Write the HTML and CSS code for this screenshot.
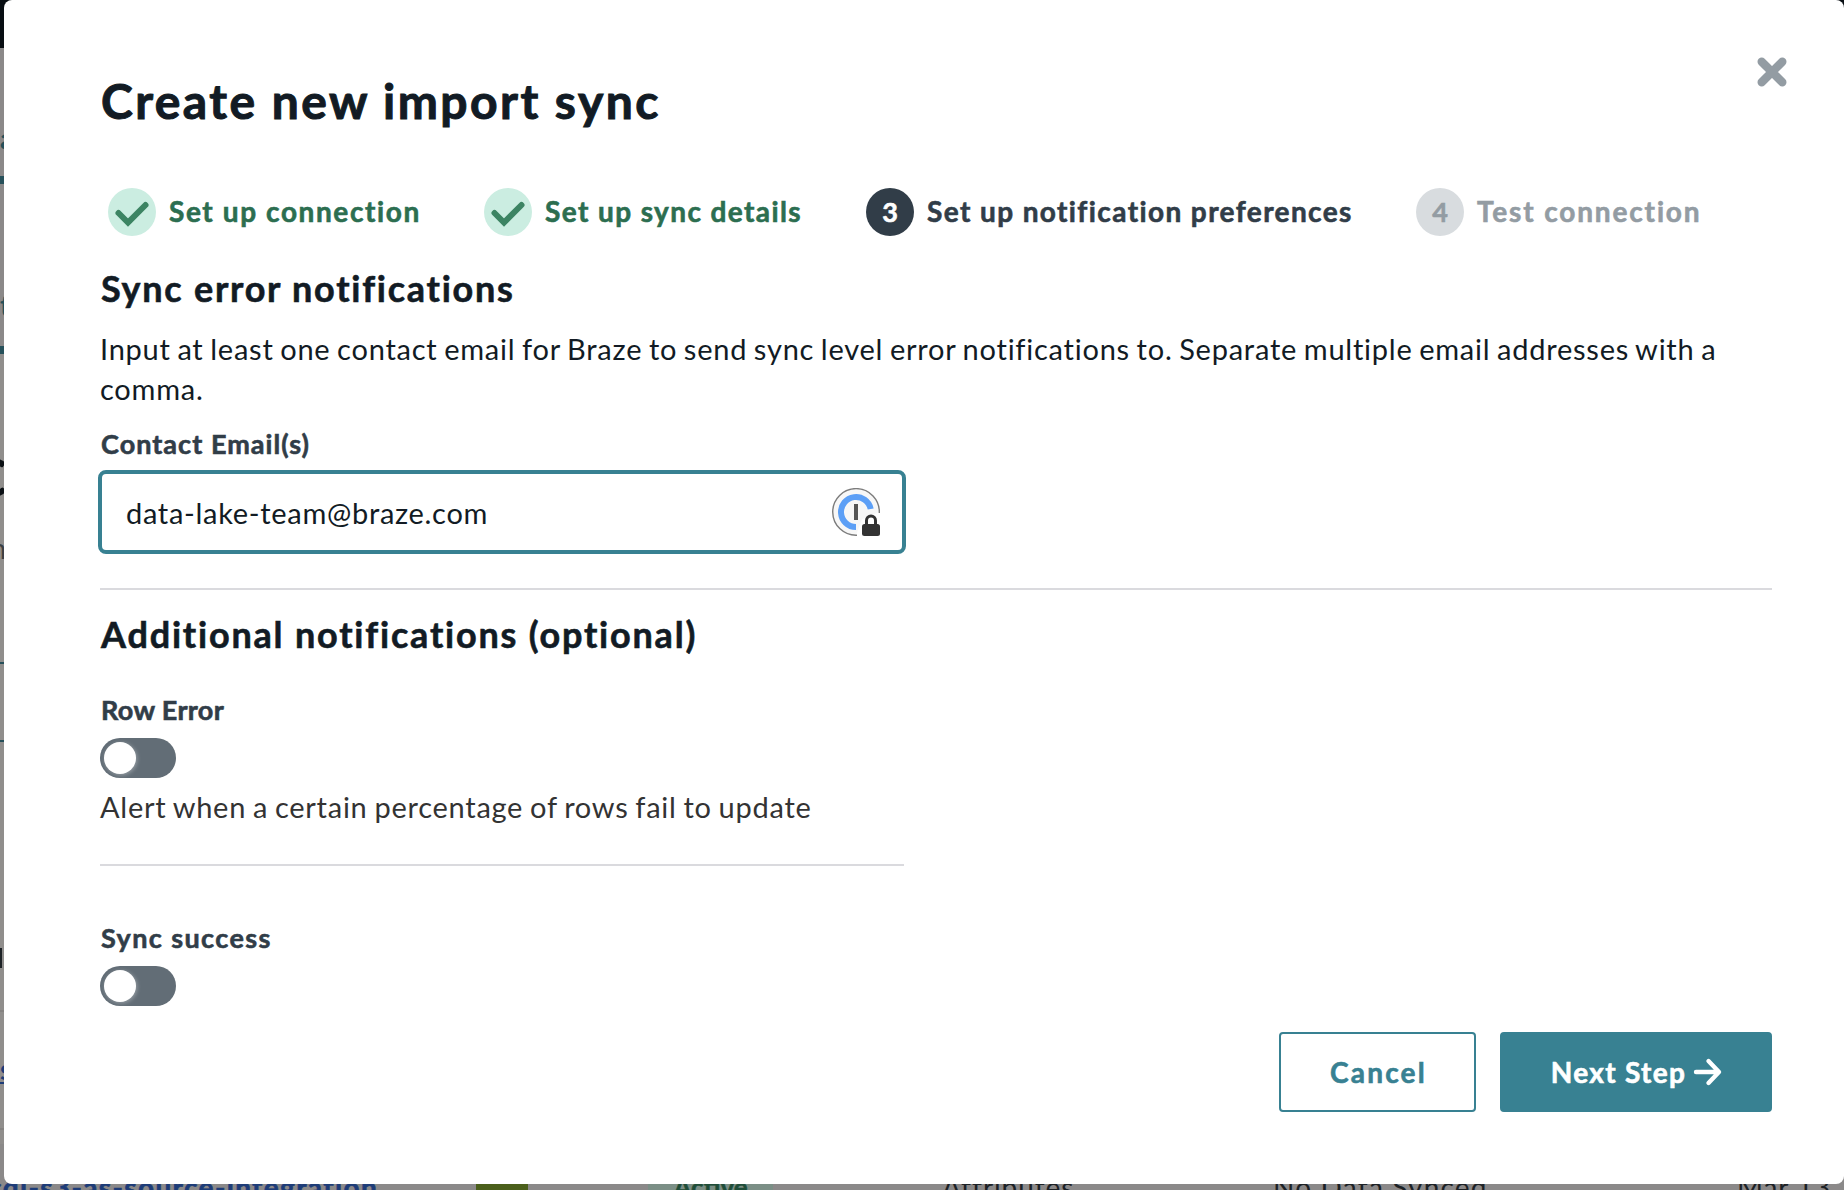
FILE: index.html
```html
<!DOCTYPE html>
<html lang="en">
<head>
<meta charset="utf-8">
<title>Create new import sync</title>
<link rel="stylesheet" href="styles.css">
</head>
<body>
<div class="page" aria-hidden="true">
  <div class="page-topbar"></div>
  <div class="page-tab page-tab-first">a</div>
  <div class="page-tab page-tab-second">t</div>
  <div class="page-body">
    <div class="page-title">C</div>
    <div class="page-note">n</div>
    <div class="page-field"></div>
    <div class="page-heading"></div>
    <div class="page-row"><span class="page-link">s</span></div>
  </div>
  <div class="table-row">
    <span class="cell-name">cdi-s3-as-source-integration</span>
    <span class="cell-icon"><svg viewBox="0 0 52 52" width="52" height="52"><path d="M10 21l2 18M24 23l18 10M38 22l6 14" fill="none" stroke="#a3ad85" stroke-width="2"/></svg></span>
    <span class="cell-badge">Active</span>
    <span class="cell-type">Attributes</span>
    <span class="cell-sync">No Data Synced</span>
    <span class="cell-date">Mar 13,</span>
  </div>
</div>

<main class="modal" role="dialog" aria-modal="true">
  <button class="close" aria-label="Close"><svg viewBox="0 0 30 30" width="30" height="30"><path d="M4.7 4.7l20.6 20.6M25.3 4.7L4.7 25.3" fill="none" stroke="#939ca3" stroke-width="8.4" stroke-linecap="round"/></svg></button>
  <h1 class="title">Create new import sync</h1>
  <ol class="steps">
    <li class="step step-done"><span class="bullet"><svg viewBox="0 0 48 48" width="48" height="48"><path d="M10.5 25l9.500 9.500L37.500 17" fill="none" stroke="#3c8463" stroke-width="6" stroke-linecap="round"/></svg></span><span>Set up connection</span></li>
    <li class="step step-done"><span class="bullet"><svg viewBox="0 0 48 48" width="48" height="48"><path d="M10.5 25l9.500 9.500L37.500 17" fill="none" stroke="#3c8463" stroke-width="6" stroke-linecap="round"/></svg></span><span>Set up sync details</span></li>
    <li class="step step-current"><span class="bullet">3</span><span>Set up notification preferences</span></li>
    <li class="step step-next"><span class="bullet">4</span><span>Test connection</span></li>
  </ol>

  <h2 class="heading">Sync error notifications</h2>
  <p class="intro">Input at least one contact email for Braze to send sync level error notifications to. Separate multiple email addresses with a<br>comma.</p>
  <div class="label label-email">Contact Email(s)</div>
  <div class="input">
    <span>data-lake-team@braze.com</span>
    <svg viewBox="0 0 48 48" width="48" height="48">
      <path d="M24 47.2A23.3 23.3 0 1 1 47.3 24L30 31z" fill="#f7f7f7"/>
      <path d="M25 47.2A23.3 23.3 0 1 1 47.3 25" fill="none" stroke="#7c7c7c" stroke-width="1.4"/>
      <path d="M24 39a15 15 0 1 1 14.7-18" fill="none" stroke="#5c9ff6" stroke-width="6"/>
      <path d="M22 16h4v16h-4z" fill="#555"/>
      <path d="M34.500 36v-3.500a4.500 4.500 0 0 1 9 0v3.500" fill="none" stroke="#333" stroke-width="3"/>
      <rect x="30" y="36" width="18" height="12" rx="2.500" fill="#333"/>
    </svg>
  </div>
  <hr class="rule rule-full">
  <h2 class="heading heading-more">Additional notifications (optional)</h2>
  <div class="label label-row">Row Error</div>
  <div class="toggle"><span class="knob"></span></div>
  <p class="hint">Alert when a certain percentage of rows fail to update</p>
  <hr class="rule rule-half">
  <div class="label label-success">Sync success</div>
  <div class="toggle"><span class="knob"></span></div>
  <footer class="actions">
    <button class="button cancel">Cancel</button>
    <button class="button next"><span>Next Step</span><svg viewBox="0 0 30 30" width="30" height="30"><path d="M3 15h22M15.500 4L26 15 15.500 26" fill="none" stroke="#fff" stroke-width="4.400" stroke-linecap="round" stroke-linejoin="round"/></svg></button>
  </footer>
</main>
</body>
</html>
```
FILE: styles.css
```css
* { box-sizing: border-box; }
body { margin: 0; width: 1844px; height: 1190px; overflow: hidden; font-family: Lato, "Open Sans", sans-serif; background: #8b8989; }
h1, h2, p, ol, hr { margin: 0; padding: 0; border: 0; }

.page { position: absolute; inset: 0; overflow: hidden; display: flex; flex-direction: column; background: #8b8989; white-space: nowrap; }
.page > * { flex: none; }
.page-topbar { height: 48px; background: #080e13; }
.page-tab { width: 14px; border-bottom: 8px solid #26505a; color: #26505a; font-weight: 700; font-size: 28px; line-height: 34px; }
.page-tab-first { height: 136px; padding-top: 73px; }
.page-tab-second { height: 170px; padding-top: 104px; }
.page-body { height: 790px; display: flex; flex-direction: column; align-items: flex-start; background: #908e8c; }
.page-body > * { flex: none; }
.page-title { display: flex; justify-content: flex-end; width: 7px; height: 166px; padding-top: 90px; font-size: 54px; line-height: 66px; font-weight: 700; color: #0b1014; }
.page-note { display: flex; justify-content: flex-end; height: 142px; padding-top: 11px; width: 6px; font-size: 28px; line-height: 34px; color: #3c4043; }
.page-field { width: 10px; height: 80px; border: solid #26505a; border-width: 2px 0; }
.page-heading { height: 20px; width: 2px; margin-top: 206px; background: #1d2226; }
.page-row { width: 10px; height: 120px; margin-top: 42px; padding-top: 40px; border: solid #858381; border-width: 2px 0; }
.page-link { color: #1d3c78; font-size: 28px; line-height: 34px; font-weight: 700; text-decoration: underline; }
.table-row { height: 80px; display: flex; align-items: flex-start; padding-top: 23px; font-size: 28px; line-height: 40px; letter-spacing: .9px; color: #1d2226; }
.table-row > * { flex: none; }
.cell-name { width: 488px; margin-left: -12px; color: #1d3c78; font-weight: 700; letter-spacing: 1.36px; -webkit-text-stroke: .6px currentColor; }
.cell-icon { width: 52px; height: 52px; margin-top: -1px; background: #4b5f1b; }
.cell-badge { width: 125px; margin-left: 120px; text-align: center; background: #7b8f86; color: #1f4d38; font-weight: 700; font-size: 26px; letter-spacing: 0; -webkit-text-stroke: .5px currentColor; }
.cell-type { width: 331px; margin-left: 169px; }
.cell-sync { width: 464px; letter-spacing: 1.2px; }
.cell-icon svg { display: block; margin-top: -14px; }
.cell-icon { overflow: hidden; margin-top: -10px; }

.modal { position: absolute; left: 4px; top: 0; width: 1840px; height: 1184px; padding: 71px 72px 0 96px; border-radius: 8px; background: #fff; color: #121b24; }
.close { position: absolute; left: 1753px; top: 57px; width: 30px; height: 30px; padding: 0; border: 0; background: none; }
.close svg, .bullet svg { display: block; }
.title, .heading, .steps, .label, .button { -webkit-text-stroke: .6px currentColor; }
.title, .heading, .label { padding-left: 1px; }
.title { font-size: 48px; line-height: 60px; font-weight: 700; letter-spacing: 2.45px; -webkit-text-stroke-width: 1px; }
.steps { display: flex; margin: 57px 0 0 8px; list-style: none; font-size: 28px; font-weight: 700; line-height: 47px; letter-spacing: 1.5px; white-space: nowrap; }
.step { display: flex; gap: 13px; height: 48px; }
.step:nth-child(1) { width: 376px; letter-spacing: 1.6px; }
.step:nth-child(2) { width: 382px; letter-spacing: 1.4px; }
.step:nth-child(3) { width: 550px; letter-spacing: 1.4px; }
.bullet { flex: none; width: 48px; height: 48px; border-radius: 50%; text-align: center; letter-spacing: 0; font-size: 27px; }
.step-done { color: #2c6e50; }
.step-done .bullet { background: #cbede1; }
.step-current { color: #313d48; }
.step-current .bullet { background: #313d48; color: #fff; }
.step-next, .step-next .bullet { color: #939ca3; }
.step-next { letter-spacing: 1.85px; }
.step-next .bullet { background: #d8dcdf; }
.heading { margin-top: 30px; font-size: 36px; line-height: 44px; font-weight: 700; letter-spacing: 1.74px; }
.intro { margin-top: 19px; font-size: 29px; line-height: 40px; letter-spacing: .76px; word-spacing: -1.5px; white-space: nowrap; }
.label { font-size: 27px; line-height: 32px; font-weight: 700; color: #313d48; }
.label-email { margin-top: 19px; letter-spacing: 1.05px; }
.input { display: flex; align-items: center; justify-content: space-between; width: 808px; height: 84px; margin: 10px 0 0 -2px; padding: 0 22px 0 24px; border: 4px solid #388192; border-radius: 8px; font-size: 29px; letter-spacing: .7px; }
.rule { height: 2px; background: #dadade; }
.rule-full { margin-top: 34px; }
.heading-more { margin-top: 22px; letter-spacing: 1.8px; }
.label-row { margin-top: 38px; letter-spacing: .35px; }
.toggle { width: 76px; height: 40px; margin-top: 12px; padding: 4px; border-radius: 20px; background: #626d76; }
.knob { display: block; width: 32px; height: 32px; border-radius: 50%; background: #fff; box-shadow: 1px 1px 4px rgba(255,255,255,.35); }
.hint { margin-top: 9px; font-size: 29px; line-height: 40px; letter-spacing: .74px; word-spacing: -1.3px; color: #333; white-space: nowrap; }
.rule-half { width: 804px; margin-top: 37px; }
.label-success { margin-top: 56px; letter-spacing: 1.4px; }
.actions { display: flex; justify-content: flex-end; gap: 24px; margin-top: 26px; }
.button { display: flex; align-items: center; justify-content: center; height: 80px; padding: 0 0 1px 2px; border: 2px solid #388192; border-radius: 4px; font: 700 28px/40px Lato, sans-serif; }
.cancel { width: 197px; background: #fff; color: #388192; letter-spacing: 2.2px; }
.next { width: 272px; gap: 7px; background: #388192; color: #fff; letter-spacing: 1.3px; }
```
